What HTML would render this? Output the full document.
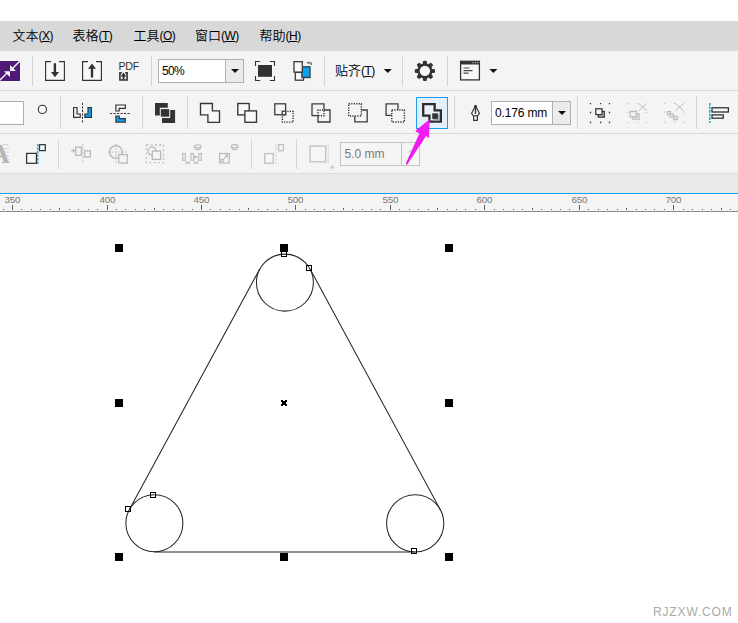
<!DOCTYPE html>
<html lang="zh">
<head>
<meta charset="utf-8">
<title>CorelDRAW</title>
<style>
html,body{margin:0;padding:0;background:#fff;}
body{width:738px;height:623px;position:relative;overflow:hidden;font-family:"Liberation Sans","Noto Sans CJK SC",sans-serif;font-size:12px;color:#000;}
.abs{position:absolute;}
#menubar{left:0;top:21px;width:738px;height:30px;background:#d8d8d8;}
#tools{left:0;top:51px;width:738px;height:122px;background:#f4f4f4;}
.hline{left:0;width:738px;height:1px;background:#dadada;}
#band{left:0;top:174px;width:738px;height:19px;background:#e9e9e9;}
#blue{left:0;top:193px;width:738px;height:1px;background:#0fa2f0;}
#ruler{left:0;top:194px;width:738px;height:17px;background:#f4f4f4;}
#rulerline{left:0;top:211px;width:738px;height:1px;background:#8a8a8a;}
.mi{top:28px;height:16px;line-height:16px;white-space:nowrap;font-size:12px;color:#000;}
u{text-decoration:underline;text-underline-offset:0.5px;text-decoration-thickness:1px;}
.cj{font-size:13px;font-weight:350;}
.la{letter-spacing:-0.5px;}
.vsep{width:1px;background:#d5d5d5;}
.txt{white-space:nowrap;line-height:16px;height:16px;}
.rl{top:194.2px;font-size:9.8px;line-height:11px;color:#787878;width:30px;text-align:center;letter-spacing:-0.25px;}
#svg{left:0;top:0;}
</style>
</head>
<body>
<div id="menubar" class="abs"></div>
<div class="abs mi" style="left:12.5px"><span class="cj">文本</span><span class="la">(<u>X</u>)</span></div>
<div class="abs mi" style="left:72.5px"><span class="cj">表格</span><span class="la">(<u>T</u>)</span></div>
<div class="abs mi" style="left:133.5px"><span class="cj">工具</span><span class="la">(<u>O</u>)</span></div>
<div class="abs mi" style="left:195px"><span class="cj">窗口</span><span class="la">(<u>W</u>)</span></div>
<div class="abs mi" style="left:259.5px"><span class="cj">帮助</span><span class="la">(<u>H</u>)</span></div>

<div id="tools" class="abs"></div>
<div class="abs hline" style="top:90px"></div>
<div class="abs hline" style="top:133px"></div>
<div class="abs hline" style="top:173px;background:#dcdcdc"></div>
<div id="band" class="abs"></div>
<div id="blue" class="abs"></div>
<div id="ruler" class="abs"></div>
<div id="rulerline" class="abs"></div>

<!-- row 1 separators -->
<div class="abs vsep" style="left:32px;top:56px;height:30px"></div>
<div class="abs vsep" style="left:151px;top:56px;height:30px"></div>
<div class="abs vsep" style="left:324px;top:56px;height:30px"></div>
<div class="abs vsep" style="left:402px;top:56px;height:30px"></div>
<div class="abs vsep" style="left:447px;top:56px;height:30px"></div>
<!-- row 2 separators -->
<div class="abs vsep" style="left:60px;top:96px;height:33px"></div>
<div class="abs vsep" style="left:142px;top:96px;height:33px"></div>
<div class="abs vsep" style="left:187px;top:96px;height:33px"></div>
<div class="abs vsep" style="left:454px;top:96px;height:33px"></div>
<div class="abs vsep" style="left:577px;top:96px;height:33px"></div>
<div class="abs vsep" style="left:696px;top:96px;height:33px"></div>
<!-- row 3 separators -->
<div class="abs vsep" style="left:58px;top:139px;height:30px"></div>
<div class="abs vsep" style="left:251px;top:139px;height:30px"></div>
<div class="abs vsep" style="left:296px;top:139px;height:30px"></div>

<!-- zoom combo -->
<div class="abs" style="left:158px;top:59px;width:86px;height:24px;box-sizing:border-box;border:1px solid #b0b0b0;background:#fff"></div>
<div class="abs" style="left:225px;top:60px;width:18px;height:22px;background:#ebebeb;border-left:1px solid #b0b0b0;box-sizing:border-box"></div>
<div class="abs txt" style="left:162px;top:63px;letter-spacing:-0.7px">50%</div>
<!-- snap text -->
<div class="abs txt" style="left:335px;top:62.5px"><span class="cj">贴齐</span><span class="la">(<u>T</u>)</span></div>
<!-- PDF -->
<div class="abs txt" style="left:118.5px;top:57.5px;font-size:10.7px;line-height:16px;color:#333;letter-spacing:-0.3px">PDF</div>

<!-- row 2 input -->
<div class="abs" style="left:-2px;top:101px;width:26px;height:24px;box-sizing:border-box;border:1px solid #adadad;background:#fff"></div>
<!-- highlight button -->
<div class="abs" style="left:416px;top:97px;width:32px;height:32px;box-sizing:border-box;border:1px solid #1c9cf0;background:#e3f0fc"></div>
<!-- outline width combo -->
<div class="abs" style="left:491px;top:101px;width:80px;height:24px;box-sizing:border-box;border:1px solid #b0b0b0;background:#fff"></div>
<div class="abs" style="left:552px;top:102px;width:18px;height:22px;background:#ebebeb;border-left:1px solid #b0b0b0;box-sizing:border-box"></div>
<div class="abs txt" style="left:495px;top:105px;letter-spacing:-0.15px">0.176 mm</div>

<!-- row 3 input -->
<div class="abs" style="left:340px;top:142px;width:80px;height:24px;box-sizing:border-box;border:1px solid #c4c4c4;background:#f5f5f5"></div>
<div class="abs" style="left:401px;top:143px;width:1px;height:22px;background:#c4c4c4"></div>
<div class="abs txt" style="left:344.5px;top:146px;color:#7a7a7a">5.0 mm</div>

<!-- ruler labels -->
<div class="abs rl" style="left:-2.7px">350</div>
<div class="abs rl" style="left:92.3px">400</div>
<div class="abs rl" style="left:186.3px">450</div>
<div class="abs rl" style="left:280.3px">500</div>
<div class="abs rl" style="left:375.3px">550</div>
<div class="abs rl" style="left:469.3px">600</div>
<div class="abs rl" style="left:564.3px">650</div>
<div class="abs rl" style="left:658.3px">700</div>


<!-- watermark -->
<div class="abs txt" style="left:653px;top:604px;font-size:12px;letter-spacing:0.85px;color:#aaa">RJZXW.COM</div>

<svg id="svg" class="abs" width="738" height="623" viewBox="0 0 738 623">
<path d="M3.5 209.0V210M12.5 205.0V210M21.5 209.0V210M31.5 209.0V210M40.5 209.0V210M50.5 209.0V210M59.5 208.0V210M69.5 209.0V210M78.5 209.0V210M88.5 209.0V210M97.5 209.0V210M107.5 205.0V210M116.5 209.0V210M125.5 209.0V210M135.5 209.0V210M144.5 209.0V210M154.5 208.0V210M163.5 209.0V210M173.5 209.0V210M182.5 209.0V210M192.5 209.0V210M201.5 205.0V210M210.5 209.0V210M220.5 209.0V210M229.5 209.0V210M239.5 209.0V210M248.5 208.0V210M258.5 209.0V210M267.5 209.0V210M277.5 209.0V210M286.5 209.0V210M295.5 205.0V210M305.5 209.0V210M314.5 209.0V210M324.5 209.0V210M333.5 209.0V210M343.5 208.0V210M352.5 209.0V210M362.5 209.0V210M371.5 209.0V210M380.5 209.0V210M390.5 205.0V210M399.5 209.0V210M409.5 209.0V210M418.5 209.0V210M428.5 209.0V210M437.5 208.0V210M447.5 209.0V210M456.5 209.0V210M465.5 209.0V210M475.5 209.0V210M484.5 205.0V210M494.5 209.0V210M503.5 209.0V210M513.5 209.0V210M522.5 209.0V210M532.5 208.0V210M541.5 209.0V210M551.5 209.0V210M560.5 209.0V210M569.5 209.0V210M579.5 205.0V210M588.5 209.0V210M598.5 209.0V210M607.5 209.0V210M617.5 209.0V210M626.5 208.0V210M636.5 209.0V210M645.5 209.0V210M654.5 209.0V210M664.5 209.0V210M673.5 205.0V210M683.5 209.0V210M692.5 209.0V210M702.5 209.0V210M711.5 209.0V210M721.5 208.0V210M730.5 209.0V210M739.5 209.0V210" stroke="#5f5f5f" stroke-width="1" fill="none"/>
<!-- ===== ROW 1 ===== -->
<!-- purple icon -->
<g>
<rect x="-1" y="61" width="21" height="20" fill="#4f1a78"/>
<path d="M20.2 60.8 L12.5 68.5 M-1 81 L7 73" stroke="#f4f4f4" stroke-width="1.5" fill="none"/>
<path d="M10.1 64.9V70.9H15.9z M3.9 71.2H10V77z" fill="#f4f4f4"/>
</g>
<!-- import -->
<rect x="46" y="62" width="18" height="18" fill="#f8f8f8"/>
<path d="M51 61.6H45.6V80.4H64.4V61.6H59" fill="none" stroke="#333" stroke-width="1.15"/>
<path d="M53.7 64.2a1.2 1.2 0 0 1 2.4 0v7.9h2.9L55 77.3 51 72.1h2.7z" fill="#333"/>
<!-- export -->
<rect x="83" y="62" width="18" height="18" fill="#f8f8f8"/>
<path d="M88 61.6H82.6V80.4H101.4V61.6H96" fill="none" stroke="#333" stroke-width="1.15"/>
<path d="M92 63.6 96 68.8h-2.8v7.7a1.2 1.2 0 0 1 -2.4 0v-7.7h-2.8z" fill="#333"/>
<!-- pdf small icon -->
<g>
<rect x="119.8" y="73" width="7.4" height="7" fill="#f8f8f8"/>
<path d="M121.8 72.9H119.9V80H127.1V72.9H125.2" fill="none" stroke="#333" stroke-width="1.6"/>
<path d="M123.5 72.6 126.4 76.4h-1.9v3.4h-2v-3.4h-1.9z" fill="#333"/>
</g>
<!-- zoom combo arrow -->
<path d="M231 69h8l-4 4z" fill="#111"/>
<!-- full screen -->
<g>
<rect x="258" y="65" width="14" height="11.8" fill="#333"/>
<path d="M255.5 66V61.5H260.2 M269.8 61.5H274.5V66 M274.5 76V80.5H269.8 M260.2 80.5H255.5V76" fill="none" stroke="#333" stroke-width="1.1"/>
</g>
<!-- view manager -->
<g stroke="#3a3a3a" stroke-width="1.3">
<rect x="295.3" y="72.4" width="8.2" height="7.8" fill="#f8f8f8"/>
<rect x="301.9" y="66.8" width="8.1" height="10.7" fill="#08a4f0"/>
<rect x="294" y="61.7" width="8.3" height="10.4" fill="#f8f8f8"/>
</g>
<path d="M308 62.8h3.2v2.4 M308.2 61.8l-1 1 1 1" stroke="#333" stroke-width="0.9" fill="none"/>
<!-- snap arrow -->
<path d="M383.8 69h8l-4 4z" fill="#111"/>
<!-- gear -->
<g transform="translate(424.9 70.9)">
<g fill="#333">
<circle r="7.6"/>
<g id="tooth"><rect x="-2" y="-10.1" width="4" height="5" rx="1.2"/></g>
<rect x="-2" y="-10.1" width="4" height="5" rx="1.2" transform="rotate(45)"/>
<rect x="-2" y="-10.1" width="4" height="5" rx="1.2" transform="rotate(90)"/>
<rect x="-2" y="-10.1" width="4" height="5" rx="1.2" transform="rotate(135)"/>
<rect x="-2" y="-10.1" width="4" height="5" rx="1.2" transform="rotate(180)"/>
<rect x="-2" y="-10.1" width="4" height="5" rx="1.2" transform="rotate(225)"/>
<rect x="-2" y="-10.1" width="4" height="5" rx="1.2" transform="rotate(270)"/>
<rect x="-2" y="-10.1" width="4" height="5" rx="1.2" transform="rotate(315)"/>
</g>
<circle r="5.2" fill="#f6f6f6"/>
</g>
<!-- window icon -->
<g>
<rect x="460.6" y="61.3" width="18.8" height="18.6" fill="#f8f8f8" stroke="#333" stroke-width="1.3"/>
<rect x="460.6" y="61.3" width="18.8" height="3.2" fill="#333"/>
<path d="M463.5 68h6 M463.5 70.6h9 M463.5 73.2h5" stroke="#484848" stroke-width="1.2"/>
<path d="M472.5 62.7h1.2m1.2 0h1.2m1.2 0h1.2" stroke="#ddd" stroke-width="1"/>
</g>
<path d="M489.4 69h8l-4 4z" fill="#111"/>
<!-- ===== ROW 2 ===== -->
<circle cx="42.4" cy="109.4" r="4.1" fill="#fafafa" stroke="#333" stroke-width="1.1"/>
<!-- mirror H -->
<g stroke="#333" stroke-width="1.2">
<path d="M73.6 107.5H77V114H80.2V117.4H73.6z" fill="#f8f8f8"/>
<path d="M91.4 107.5H88V114H84.9V117.4H91.4z" fill="#0ea5f0"/>
<path d="M82.5 102.8V123" stroke-dasharray="2.2 1.3" fill="none" stroke-width="1"/>
</g>
<!-- mirror V -->
<g stroke="#333" stroke-width="1.2">
<path d="M115.9 105H125.3V108.4H119.2V111H115.9z" fill="#f8f8f8"/>
<path d="M115.9 116H119.2V118.7H125.3V122.1H115.9z" fill="#0ea5f0"/>
<path d="M110 113.5H130" stroke-dasharray="2.2 1.3" fill="none" stroke-width="1"/>
</g>
<!-- order stack -->
<g fill="#333">
<path d="M155 103H167.8V107.7H159.8V115.6H155z"/>
<path d="M175.1 110V122.9H162V118H170.2V110z"/>
<rect x="160.8" y="109.1" width="8.4" height="7.6"/>
</g>
<!-- weld -->
<path d="M200.5 103.5H212.4V110.8H219.5V122.3H207.9V114.9H200.5z" fill="#f8f8f8" stroke="#363636" stroke-width="1.35"/>
<!-- trim -->
<g fill="#f8f8f8" stroke="#363636" stroke-width="1.35">
<rect x="237.8" y="103.5" width="11.4" height="11.4"/>
<rect x="244.9" y="110.9" width="11.6" height="11.4"/>
</g>
<!-- intersect -->
<g fill="none" stroke="#3c3c3c" stroke-width="1.3">
<rect x="282.4" y="111.4" width="10.8" height="10.7" stroke-dasharray="1.25 1.2" stroke="#333" stroke-width="1.4"/>
<rect x="274.8" y="103.8" width="10.8" height="10.9" fill="#f6f6f6"/>
<rect x="282.2" y="111.2" width="3.4" height="3.5" fill="#fff"/>
</g>
<!-- simplify -->
<g fill="none" stroke="#3c3c3c" stroke-width="1.3">
<path d="M324 109.8V103.8H312V115.6H317.6"/>
<path d="M324 110H330V122H318V115.6"/>
<path d="M318 115.8V110H324V115.8z" stroke-dasharray="1.25 1.2" stroke="#333" stroke-width="1.4"/>
</g>
<!-- front minus back -->
<g fill="none" stroke="#3c3c3c" stroke-width="1.3">
<rect x="348.7" y="103.8" width="12.6" height="12.2" stroke-dasharray="1.25 1.25" stroke="#333" stroke-width="1.4"/>
<path d="M361.5 110H367.2V121.9H354.8V116.2"/>
</g>
<!-- back minus front -->
<g fill="none" stroke="#3c3c3c" stroke-width="1.3">
<rect x="391.8" y="110" width="12.6" height="12" stroke-dasharray="1.25 1.25" stroke="#333" stroke-width="1.4" fill="#f6f6f6"/>
<path d="M398 109.8V103.8H386.1V115.4H391.6"/>
</g>
<!-- boundary (highlighted) -->
<g>
<path d="M423.2 104.2H434.65V110.45H440.85V121.65H429.45V115.65H423.2z" fill="#e9f3fd" stroke="#2e2b2a" stroke-width="2.3"/>
<path d="M437.9 114.6h1.7v5.9h-6.2v-1.6h4.5z" fill="#97a2ad"/>
<rect x="432.2" y="113.3" width="5.7" height="5.6" fill="#333"/>
</g>
<!-- pen nib -->
<g fill="none" stroke="#333" stroke-width="1.2" stroke-linejoin="round">
<path d="M475.5 105.8 L471.6 113.3 L473.6 116 H477.4 L479.4 113.3 Z" fill="#fafafa"/>
<path d="M475.5 106V113.4" stroke-width="1.4" stroke-linecap="round"/>
<circle cx="475.5" cy="106.3" r="0.8" fill="#333"/>
<rect x="473.6" y="116" width="3.8" height="4.3" fill="#fafafa"/>
</g>
<path d="M558 111h8l-4 4z" fill="#111"/>
<!-- group -->
<g>
<path d="M589.85 103.7h1.3M599.95 103.7h1.3M608.85 103.7h1.3M589.85 112.5h1.3M608.85 112.5h1.3M589.85 122.5h1.3M599.95 122.5h1.3M608.85 122.5h1.3" stroke="#333" stroke-width="1.3"/>
<rect x="598.3" y="111.4" width="6" height="5.7" fill="#c4c4c4" stroke="#333" stroke-width="1.25"/>
<rect x="595.8" y="108.8" width="6.2" height="5.8" fill="#f8f8f8" stroke="#333" stroke-width="1.25"/>
</g>
<!-- ungroup (disabled) -->
<g stroke="#bcbcbc" fill="none">
<path d="M626.85 103.7h1.3M637.05 103.7h1.3M626.85 112.5h1.3M645.85 112.5h1.3M626.85 122.5h1.3M637.05 122.5h1.3M645.85 122.5h1.3" stroke-width="1.2" stroke="#c6c6c6"/>
<rect x="632.6" y="113.8" width="6.6" height="5.6" stroke-width="1.3" fill="#e2e2e2" stroke="#c6c6c6"/>
<rect x="630" y="111.4" width="6.4" height="5.5" stroke-width="1.3" fill="#f1f1f1"/>
<path d="M638.9 103.5L646.7 110.9M646.7 103.5L638.9 110.9" stroke-width="1"/>
</g>
<!-- ungroup all (disabled) -->
<g stroke="#bcbcbc" fill="none">
<path d="M663.85 103.5h1.3M673.85 103.5h1.3M663.85 112.2h1.3M682.85 112.2h1.3M663.85 122.4h1.3M673.85 122.4h1.3M682.85 122.4h1.3" stroke-width="1.2" stroke="#c6c6c6"/>
<rect x="667.3" y="111.6" width="3.2" height="3" stroke-width="1.2" fill="#ededed"/>
<rect x="670" y="114" width="3.4" height="3" stroke-width="1.2" fill="#ededed"/>
<rect x="673.8" y="116.3" width="3.6" height="3.4" stroke-width="1.2" fill="#ededed"/>
<path d="M675.4 103.3L683.8 111M683.8 103.3L675.4 111" stroke-width="1"/>
</g>
<!-- align -->
<g>
<path d="M709.8 102.9V123" stroke="#0ea5f0" stroke-width="1.5" stroke-dasharray="2.6 1"/>
<rect x="712" y="107.8" width="16.4" height="4.2" fill="#f6f6f6" stroke="#333" stroke-width="1.3"/>
<rect x="712" y="114.9" width="11.3" height="3.3" fill="#f6f6f6" stroke="#333" stroke-width="1.3"/>
</g>
<!-- ===== ROW 3 ===== -->
<!-- A icon disabled -->
<g>
<text x="-10.3" y="163.4" font-family="'Liberation Serif',serif" font-weight="bold" font-size="28" fill="#b6b6b6">A</text>
<path d="M3 144.5h6M4 148.5h5M5.5 152.2h3.5M6.5 155.8h2.5M7.5 159.5h1.5" stroke="#c8c8c8" stroke-width="1" stroke-dasharray="2 1"/>
</g>
<!-- node icon -->
<g>
<rect x="26.6" y="153.4" width="9.8" height="9.9" fill="#f8f8f8" stroke="#333" stroke-width="1.25"/>
<rect x="39.5" y="144.7" width="5.8" height="5.9" fill="#f8f8f8" stroke="#333" stroke-width="1.25"/>
<path d="M37.7 144V164.2" stroke="#1aabf2" stroke-width="1.5" stroke-dasharray="2.5 1"/>
</g>
<!-- disabled 1 -->
<g stroke="#b9b9b9" fill="none" stroke-width="1.3">
<rect x="75.6" y="147.2" width="5.8" height="8.2" fill="#f4f4f4"/>
<rect x="84.6" y="150.8" width="5.7" height="6.2" fill="#f4f4f4"/>
<path d="M82.8 144.2V163.8" stroke-dasharray="2.4 1.5" stroke-width="1.1" stroke="#c8c8c8"/>
<path d="M71 150.7H74.8M72.8 149.1l1.8 1.6-1.8 1.6" stroke-width="1.1"/>
</g>
<!-- disabled 2 -->
<g stroke="#b9b9b9" fill="none" stroke-width="1.2">
<circle cx="116" cy="152" r="6.3" stroke-width="1.5"/>
<path d="M116 144V146M108 152H110" stroke-width="1.3"/>
<path d="M116 148V163.6M112 152H127.8" stroke-dasharray="2 1.2" stroke="#c4c4c4"/>
<rect x="118.8" y="154.6" width="8.5" height="8.5" fill="#f4f4f4" stroke-width="1.25"/>
</g>
<!-- disabled 3 -->
<g stroke="#b9b9b9" fill="none" stroke-width="1.3">
<rect x="146.3" y="145" width="17.3" height="17.7" stroke-dasharray="2.2 2.1" stroke="#c4c4c4"/>
<circle cx="152.1" cy="151.1" r="4"/>
<rect x="152.3" y="151.1" width="8.4" height="8.3" fill="#f4f4f4"/>
</g>
<!-- disabled 4 -->
<g stroke="#b9b9b9" fill="none" stroke-width="1.1">
<rect x="182.8" y="153.5" width="2.5" height="6.8"/>
<rect x="191" y="153.5" width="2.5" height="6.8"/>
<rect x="198.8" y="153.5" width="2.5" height="6.8"/>
<path d="M186.2 161.3v1.8h3.2v-1.8M194.6 161.3v1.8h3.2v-1.8M194.2 157h3.8M195.8 155.6l-1.6 1.4 1.6 1.4"/>
<ellipse cx="197.7" cy="146.2" rx="3.4" ry="1.5"/><path d="M195.1 147.2v1.3a2.6 1.1 0 0 0 5.2 0v-1.3"/>
</g>
<!-- disabled 5 -->
<g stroke="#b9b9b9" fill="none" stroke-width="1.2">
<rect x="219.6" y="153.5" width="9.7" height="9.5"/>
<path d="M223.3 159.3l4-4M224.9 155.1h2.6v2.6" stroke-width="1.1"/>
<rect x="220.8" y="159.4" width="2.4" height="2.4" stroke-width="1"/>
<ellipse cx="234.7" cy="146.2" rx="3.4" ry="1.5"/><path d="M232.1 147.2v1.3a2.6 1.1 0 0 0 5.2 0v-1.3"/>
</g>
<!-- disabled 6 -->
<g stroke="#bfbfbf" fill="none" stroke-width="1.3">
<rect x="264.75" y="153.55" width="8.5" height="9.7" fill="#f6f6f6"/>
<rect x="278.55" y="144.65" width="4.8" height="6" fill="#f6f6f6"/>
<path d="M275.9 144V164.3" stroke-dasharray="2.2 1.4" stroke="#d6d6d6" stroke-width="1.2"/>
</g>
<!-- disabled 7 -->
<g stroke="#c6c6c6" fill="none" stroke-width="1.5">
<rect x="310" y="146" width="15.7" height="15.7" fill="#f6f6f6"/>
<path d="M328.3 144V164" stroke-dasharray="2 1.3" stroke="#d0d0d0" stroke-width="1.1"/>
<path d="M333.6 164.8v3.8h-4.4z" fill="#c6c6c6" stroke="none"/>
</g>
<!-- spinner arrows -->
<path d="M407.5 152.5l3-3 3 3M407.5 156l3 3 3-3" fill="#d4d4d4" stroke="none"/>
<!-- magenta arrow -->
<path d="M429.8 119 L415.2 130.9 L419.4 133.5 L405.7 163.8 L407 164.9 L426.1 135.9 L428.9 138.3 Z" fill="#f01cf0"/>

<!-- canvas drawing -->
<g fill="none" stroke="#2c2323" stroke-width="1.05">
<circle cx="284.9" cy="282.6" r="28.5"/>
<circle cx="154.4" cy="523.3" r="28.5"/>
<circle cx="415.2" cy="523.4" r="28.6"/>
<path d="M259.8 268.9 L129.3 509.7 M310.1 268.9 L440.4 509.9 M154.4 551.9 L415.2 552"/>
</g>
<g fill="#000" shape-rendering="crispEdges">
<rect x="115" y="244" width="8" height="8"/><rect x="280" y="244" width="8" height="8"/><rect x="445" y="244" width="8" height="8"/>
<rect x="115" y="399" width="8" height="8"/><rect x="445" y="399" width="8" height="8"/>
<rect x="115" y="553" width="8" height="8"/><rect x="280" y="553" width="8" height="8"/><rect x="445" y="553" width="8" height="8"/>
<path d="M281 400h2v1h2v-1h2v2h-1v2h1v2h-2v-1h-2v1h-2v-2h1v-2h-1z"/>
</g>
<g fill="none" stroke="#000" stroke-width="1" shape-rendering="crispEdges">
<rect x="281.5" y="251.5" width="5" height="5"/>
<rect x="306.5" y="265.5" width="5" height="5"/>
<rect x="125.5" y="506.5" width="5" height="5"/>
<rect x="150.5" y="492.5" width="5" height="5"/>
<rect x="411.5" y="548.5" width="5" height="5"/>
</g>

</svg>
</body>
</html>
